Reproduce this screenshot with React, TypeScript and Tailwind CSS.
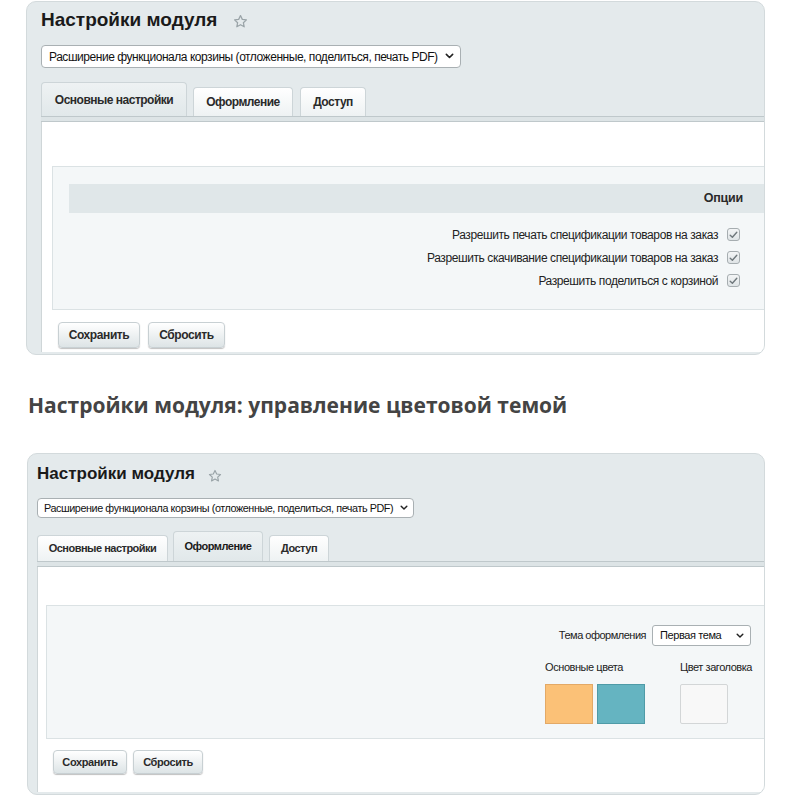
import React from "react";

const Star = ({ size }: { size: number }) => (
  <svg width={size} height={size} viewBox="0 0 24 24" fill="none" stroke="#9aa4a8" strokeWidth="2" strokeLinejoin="round">
    <polygon points="12,2.5 14.9,8.6 21.5,9.4 16.6,13.9 17.9,20.5 12,17.2 6.1,20.5 7.4,13.9 2.5,9.4 9.1,8.6" />
  </svg>
);

const Chevron = ({ w }: { w: number }) => (
  <svg width={w} height={w * 0.7} viewBox="0 0 10 7" fill="none" stroke="#222" strokeWidth="1.8" strokeLinecap="round" strokeLinejoin="round">
    <polyline points="1.5,1.5 5,5 8.5,1.5" />
  </svg>
);

const Check = () => (
  <span className="flex h-[13px] w-[13px] items-center justify-center rounded-[3px] border border-[#a6adb0] bg-gradient-to-b from-[#f3f5f6] to-[#dfe4e6]">
    <svg width="9" height="8" viewBox="0 0 9 8" fill="none" stroke="#6f787c" strokeWidth="1.4" strokeLinecap="round" strokeLinejoin="round">
      <polyline points="1.2,4.2 3.4,6.3 7.8,1.3" />
    </svg>
  </span>
);

const SEL = "Расширение функционала корзины (отложенные, поделиться, печать PDF)";

function Panel1() {
  return (
    <div className="ml-[26px] mt-[1px] flex h-[354px] w-[739px] flex-col overflow-hidden rounded-[10px] border border-[#d3dadc] bg-[#e4eaec] pb-[2px] pl-[14px]">
      <div className="flex h-[43px] items-start pt-[6px]">
        <span className="text-[19px] font-bold leading-[24px] text-[#1a1a1a]">Настройки модуля</span>
        <span className="ml-[16px] mt-[6px]">
          <Star size={15} />
        </span>
      </div>
      <div className="flex h-[23px] w-[420px] items-center justify-between rounded-[4px] border border-[#a9b0b3] bg-white pl-[7px] pr-[6px] text-[12px] tracking-[-0.46px] text-[#111]">
        <span className="whitespace-nowrap">{SEL}</span>
        <Chevron w={9} />
      </div>
      <div className="mt-[14px] flex h-[34px] items-end gap-[6px]">
        <div className="flex h-[34px] w-[146px] items-center justify-center rounded-t-[4px] border border-b-0 border-[#cdd5d8] bg-gradient-to-b from-[#eef2f3] to-[#e1e8ea] text-[12px] font-bold tracking-[-0.5px] text-[#2a2a2a]">
          Основные настройки
        </div>
        <div className="flex h-[29px] w-[100px] items-center justify-center rounded-t-[4px] border border-b-0 border-[#cdd5d8] bg-gradient-to-b from-[#ffffff] to-[#eef2f3] text-[12px] font-bold tracking-[-0.5px] text-[#2a2a2a]">
          Оформление
        </div>
        <div className="ml-[1px] flex h-[29px] w-[66px] items-center justify-center rounded-t-[4px] border border-b-0 border-[#cdd5d8] bg-gradient-to-b from-[#ffffff] to-[#eef2f3] text-[12px] font-bold tracking-[-0.5px] text-[#2a2a2a]">
          Доступ
        </div>
      </div>
      <div className="h-[6px] border-y border-[#bfc8cb] bg-[#dde4e6]" />
      <div className="flex flex-1 flex-col border-l border-[#cfd6d8] bg-white pl-[10px] pt-[44px]">
        <div className="flex h-[144px] flex-col border-y border-l border-[#dbe2e4] bg-[#f4f7f8] pl-[16px] pt-[17px]">
          <div className="flex h-[29px] items-center justify-end bg-[#e0e7e9] pr-[21px] text-[12.5px] font-bold tracking-[-0.2px] text-[#2a2a2a]">
            Опции
          </div>
          <div className="mt-[10px] flex flex-col">
            {[
              "Разрешить печать спецификации товаров на заказ",
              "Разрешить скачивание спецификации товаров на заказ",
              "Разрешить поделиться с корзиной",
            ].map((t) => (
              <div key={t} className="flex h-[23px] items-center justify-end gap-[9px] pr-[24px] text-[12px] tracking-[-0.4px] text-[#222]">
                <span>{t}</span>
                <Check />
              </div>
            ))}
          </div>
        </div>
        <div className="mt-[12px] flex gap-[8px] pl-[6px]">
          <button className="h-[26px] w-[82px] rounded-[4px] border border-[#c8d0d3] bg-gradient-to-b from-[#ffffff] to-[#dde4e6] text-[12px] font-bold tracking-[-0.4px] text-[#2a2a2a] shadow-[0_1px_1px_rgba(0,0,0,0.25)]">
            Сохранить
          </button>
          <button className="h-[26px] w-[77px] rounded-[4px] border border-[#c8d0d3] bg-gradient-to-b from-[#ffffff] to-[#dde4e6] text-[12px] font-bold tracking-[-0.4px] text-[#2a2a2a] shadow-[0_1px_1px_rgba(0,0,0,0.25)]">
            Сбросить
          </button>
        </div>
      </div>
    </div>
  );
}

function Panel2() {
  return (
    <div className="ml-[27px] mt-[34px] flex h-[342px] w-[738px] flex-col overflow-hidden rounded-[10px] border border-[#d3dadc] bg-[#e4eaec] pb-[2px] pl-[9px]">
      <div className="flex h-[44px] items-start pt-[9px]">
        <span className="text-[17px] font-bold leading-[22px] text-[#1a1a1a]">Настройки модуля</span>
        <span className="ml-[13px] mt-[6px]">
          <Star size={14} />
        </span>
      </div>
      <div className="flex h-[20px] w-[377px] items-center justify-between rounded-[4px] border border-[#a9b0b3] bg-white pl-[6px] pr-[5px] text-[10.8px] tracking-[-0.42px] text-[#111]">
        <span className="whitespace-nowrap">{SEL}</span>
        <Chevron w={8} />
      </div>
      <div className="mt-[13px] flex h-[30px] items-end gap-[5px]">
        <div className="flex h-[26px] w-[131px] items-center justify-center rounded-t-[4px] border border-b-0 border-[#cdd5d8] bg-gradient-to-b from-[#ffffff] to-[#eef2f3] text-[11px] font-bold tracking-[-0.5px] text-[#2a2a2a]">
          Основные настройки
        </div>
        <div className="flex h-[30px] w-[90px] items-center justify-center rounded-t-[4px] border border-b-0 border-[#cdd5d8] bg-gradient-to-b from-[#eef2f3] to-[#e1e8ea] text-[11px] font-bold tracking-[-0.5px] text-[#1a1a1a]">
          Оформление
        </div>
        <div className="ml-[1px] flex h-[26px] w-[60px] items-center justify-center rounded-t-[4px] border border-b-0 border-[#cdd5d8] bg-gradient-to-b from-[#ffffff] to-[#eef2f3] text-[11px] font-bold tracking-[-0.5px] text-[#2a2a2a]">
          Доступ
        </div>
      </div>
      <div className="h-[6px] border-y border-[#bfc8cb] bg-[#dde4e6]" />
      <div className="flex flex-1 flex-col border-l border-[#cfd6d8] bg-white pl-[8px] pt-[38px]">
        <div className="flex h-[134px] flex-col items-end border-y border-l border-[#dbe2e4] bg-[#f4f7f8] pr-[12px] pt-[19px]">
          <div className="mr-[1px] flex items-center gap-[6px] text-[11px] tracking-[-0.5px] text-[#222]">
            <span>Тема оформления</span>
            <div className="flex h-[21px] w-[99px] items-center justify-between rounded-[3px] border border-[#a9b0b3] bg-white pl-[7px] pr-[6px] text-[11px] tracking-[-0.4px] text-[#111]">
              <span>Первая тема</span>
              <Chevron w={8} />
            </div>
          </div>
          <div className="mt-[14px] flex gap-[35px] text-[11px] tracking-[-0.45px] text-[#222]">
            <div className="flex w-[100px] flex-col">
              <span className="h-[14px] leading-[14px]">Основные цвета</span>
              <div className="mt-[10px] flex gap-[4px]">
                <div className="h-[40px] w-[48px] border border-[#e3a966] bg-[#fbc177]" />
                <div className="h-[40px] w-[48px] border border-[#4f9ba7] bg-[#65b4c1]" />
              </div>
            </div>
            <div className="flex flex-col">
              <span className="h-[14px] leading-[14px]">Цвет заголовка</span>
              <div className="mt-[10px] h-[40px] w-[48px] rounded-[2px] border border-[#d3d6d7] bg-[#f8f8f8]" />
            </div>
          </div>
        </div>
        <div className="mt-[11px] flex gap-[6px] pl-[7px]">
          <button className="h-[24px] w-[74px] rounded-[4px] border border-[#c8d0d3] bg-gradient-to-b from-[#ffffff] to-[#dde4e6] text-[11px] font-bold tracking-[-0.4px] text-[#2a2a2a] shadow-[0_1px_1px_rgba(0,0,0,0.25)]">
            Сохранить
          </button>
          <button className="h-[24px] w-[70px] rounded-[4px] border border-[#c8d0d3] bg-gradient-to-b from-[#ffffff] to-[#dde4e6] text-[11px] font-bold tracking-[-0.4px] text-[#2a2a2a] shadow-[0_1px_1px_rgba(0,0,0,0.25)]">
            Сбросить
          </button>
        </div>
      </div>
    </div>
  );
}

export default function App() {
  return (
    <div className="min-h-[798px] w-[798px] bg-white font-['Liberation_Sans',Arial,sans-serif]">
      <Panel1 />
      <h2 className="ml-[28px] mt-[36px] font-['Open_Sans',sans-serif] text-[21px] font-bold leading-[28px] text-[#444]">
        Настройки модуля: управление цветовой темой
      </h2>
      <Panel2 />
    </div>
  );
}
